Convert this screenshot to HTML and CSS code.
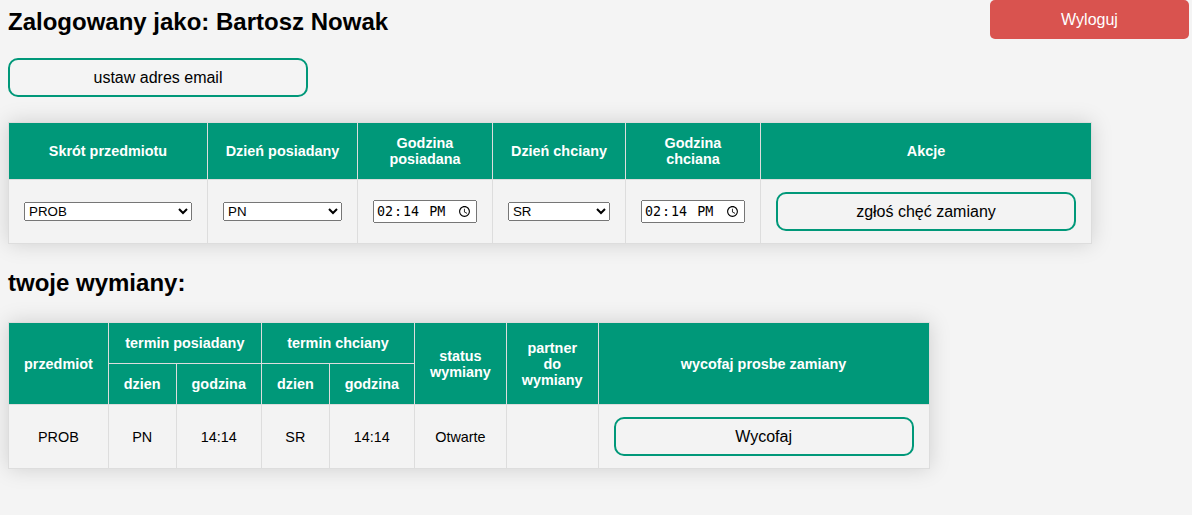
FILE: index.html
```html
<!DOCTYPE html>
<html lang="pl">
<head>
<meta charset="utf-8">
<title>Wymiany</title>
<link rel="stylesheet" href="styles.css">
</head>
<body>
<div class="page">
  <div class="topbar">
    <h2 class="title">Zalogowany jako: Bartosz Nowak</h2>
    <button class="btn-logout">Wyloguj</button>
  </div>
  <button class="btn-outline">ustaw adres email</button>

  <table class="styled-table styled-table--first">
    <thead>
      <tr>
        <th>Skrót przedmiotu</th>
        <th>Dzień posiadany</th>
        <th>Godzina posiadana</th>
        <th>Dzień chciany</th>
        <th>Godzina chciana</th>
        <th>Akcje</th>
      </tr>
    </thead>
    <tbody>
      <tr>
        <td><select class="sel sel-subject"><option>PROB</option></select></td>
        <td><select class="sel sel-day"><option>PN</option></select></td>
        <td><input class="time" type="time" value="14:14"></td>
        <td><select class="sel sel-day2"><option>SR</option></select></td>
        <td><input class="time" type="time" value="14:14"></td>
        <td><button class="btn-outline">zgłoś chęć zamiany</button></td>
      </tr>
    </tbody>
  </table>

  <h2 class="section">twoje wymiany:</h2>

  <table class="styled-table">
    <thead>
      <tr>
        <th rowspan="2">przedmiot</th>
        <th colspan="2">termin posiadany</th>
        <th colspan="2">termin chciany</th>
        <th rowspan="2">status wymiany</th>
        <th rowspan="2">partner do wymiany</th>
        <th rowspan="2">wycofaj prosbe zamiany</th>
      </tr>
      <tr>
        <th>dzien</th>
        <th>godzina</th>
        <th>dzien</th>
        <th>godzina</th>
      </tr>
    </thead>
    <tbody>
      <tr>
        <td>PROB</td>
        <td>PN</td>
        <td>14:14</td>
        <td>SR</td>
        <td>14:14</td>
        <td>Otwarte</td>
        <td></td>
        <td><button class="btn-outline">Wycofaj</button></td>
      </tr>
    </tbody>
  </table>
</div>
</body>
</html>
```

FILE: styles.css
```css
html, body {
  margin: 0;
  padding: 0;
  background: #f4f4f4;
}

body {
  font-family: "Liberation Sans", Arial, sans-serif;
  color: #000;
}

.page {
  padding: 0 8px 8px;
}

.topbar {
  display: flex;
  justify-content: space-between;
  align-items: flex-start;
  margin-bottom: 19px;
}

.title {
  margin: 8px 0 0;
  font-size: 24px;
  font-weight: bold;
}

.btn-logout {
  width: 199px;
  height: 39px;
  margin-right: -5px;
  background: #d9534f;
  color: #fff;
  border: none;
  border-radius: 5px;
  font-family: "Liberation Sans", Arial, sans-serif;
  font-size: 16px;
  padding: 0;
}

.btn-outline {
  display: block;
  box-sizing: border-box;
  width: 300px;
  height: 39px;
  padding: 0 8px;
  font-family: "Liberation Sans", Arial, sans-serif;
  font-size: 16px;
  color: #000;
  background: transparent;
  border: 2px solid #009879;
  border-radius: 10px;
}

.styled-table {
  border-collapse: collapse;
  margin: 25px 0 25px;
  font-size: 0.9em;
  width: min-content;
  box-shadow: 0 0 20px rgba(0, 0, 0, 0.15);
}

.styled-table th,
.styled-table td {
  padding: 12px 15px;
  border: 1px solid #dddddd;
  text-align: center;
}

.styled-table thead tr {
  background: #009879;
  color: #fff;
}

.styled-table tbody tr {
  background: #f3f3f3;
}

.section {
  margin: 0;
  font-size: 24px;
  font-weight: bold;
}

.sel {
  font-family: "Liberation Sans", Arial, sans-serif;
  font-size: 13.33px;
}

.sel-subject { width: 168px; }
.sel-day { width: 119px; }
.sel-day2 { width: 102px; }

.time {
  font-family: "DejaVu Sans Mono", monospace;
  font-size: 13.33px;
}
```
